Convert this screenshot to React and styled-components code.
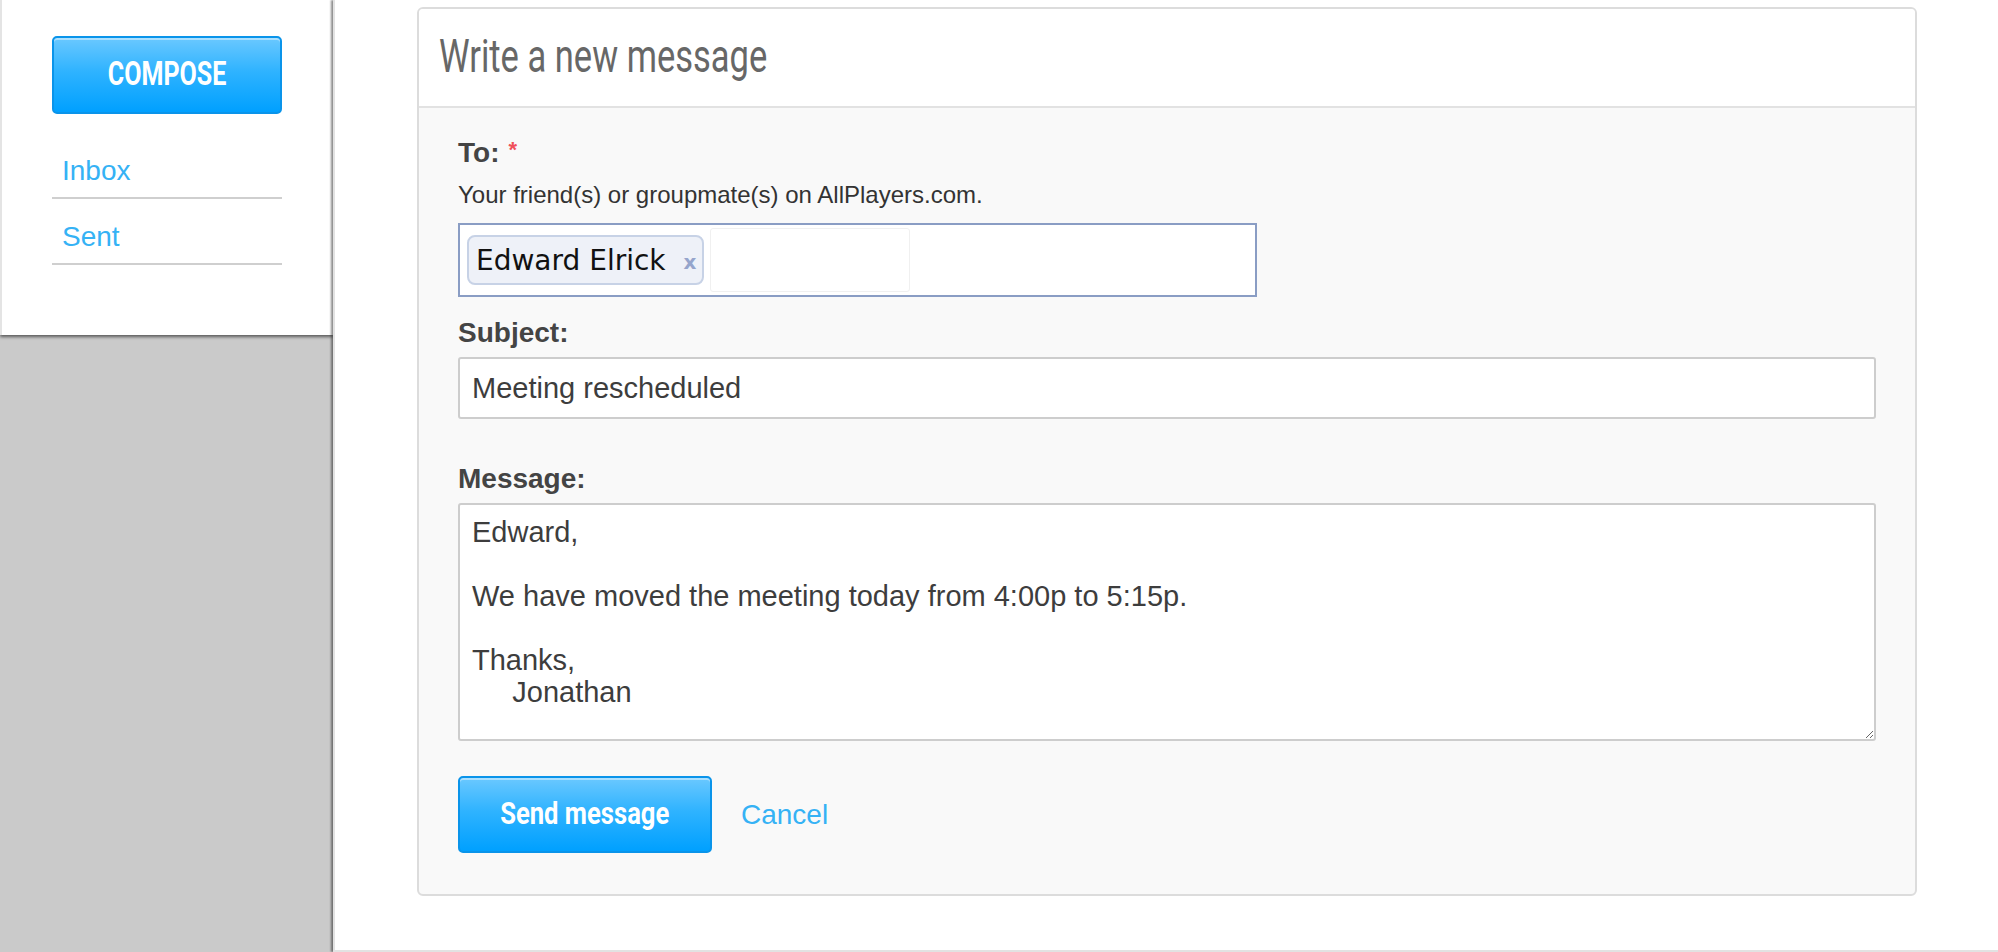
import React from "react";
import styled, { createGlobalStyle } from "styled-components";

const GlobalStyle = createGlobalStyle`
  html, body {
    margin: 0;
    padding: 0;
    background: #fff;
    font-family: "Liberation Sans", Arial, sans-serif;
  }
`;

// No narrow face is installed, so the condensed headings squeeze Roboto
const Condensed = styled.span`
  display: inline-block;
  font-family: Roboto, "Liberation Sans", sans-serif;
  transform: scaleX(${(p) => p.$scale});
  transform-origin: ${(p) => p.$origin || "center"};
  white-space: nowrap;
`;

const Page = styled.div`
  display: flex;
  width: 1998px;
  height: 952px;
  overflow: hidden;
`;

const LeftColumn = styled.div`
  width: 333px;
  flex-shrink: 0;
  background: #cacaca;
`;

const Sidebar = styled.nav`
  background: #fff;
  height: 335px;
  box-sizing: border-box;
  padding: 36px 51px 0 50px;
  border-left: 2px solid #e4e4e4;
  box-shadow: 0 2px 3px rgba(0, 0, 0, 0.55);
`;

const BlueButton = styled.button`
  display: flex;
  align-items: center;
  justify-content: center;
  box-sizing: border-box;
  width: ${(p) => p.$width}px;
  height: ${(p) => p.$height}px;
  margin: 0;
  padding: 0 0 4px;
  border: 2px solid #0a94ea;
  border-radius: 5px;
  background: linear-gradient(to bottom, #6ac8ff 0%, #2fb3ff 45%, #00a0ff 100%);
  box-shadow: inset 0 2px 0 rgba(255, 255, 255, 0.45);
  color: #fff;
  font-weight: 700;
  font-size: ${(p) => p.$size}px;
  line-height: 1;
  cursor: pointer;
`;

const NavList = styled.ul`
  list-style: none;
  margin: 19px 0 0;
  padding: 0;
`;

const NavItem = styled.li`
  padding: 22px 0 10px 10px;
  line-height: 32px;
  font-size: 28px;
  color: #35b2f5;
  border-bottom: 2px solid #cfcfcf;
`;

const Main = styled.main`
  flex: 1;
  box-sizing: border-box;
  height: 952px;
  background: #fff;
  border-left: 2px solid #e2e2e2;
  border-bottom: 2px solid #e2e2e2;
  box-shadow: -2px 0 2px rgba(0, 0, 0, 0.45);
  padding: 7px 81px 0 82px;
`;

const Panel = styled.section`
  border: 2px solid #dcdcdc;
  border-radius: 6px;
  overflow: hidden;
  background: #f9f9f9;
`;

const PanelHeader = styled.header`
  height: 99px;
  box-sizing: border-box;
  padding: 21px 0 0 20px;
  background: #fff;
  border-bottom: 2px solid #e2e2e2;
`;

const Title = styled.h1`
  margin: 0;
  font-weight: 400;
  font-size: 46px;
  line-height: 52px;
  color: #676767;
`;

const PanelBody = styled.div`
  padding: 26px 0 41px 39px;
`;

const Label = styled.label`
  display: block;
  margin-top: ${(p) => p.$top || 0}px;
  font-size: 28px;
  line-height: 32px;
  font-weight: 700;
  color: #444;
`;

const Required = styled.span`
  color: #f0505a;
  font-size: 22px;
  margin-left: 9px;
  vertical-align: 5px;
`;

const Hint = styled.div`
  margin-top: 12px;
  font-size: 24px;
  line-height: 28px;
  color: #333;
`;

const TokenBox = styled.div`
  display: flex;
  align-items: center;
  gap: 6px;
  box-sizing: border-box;
  width: 799px;
  height: 74px;
  margin-top: 14px;
  padding: 0 7px;
  background: #fff;
  border: 2px solid #8a9dc4;
`;

const Token = styled.span`
  display: flex;
  align-items: center;
  box-sizing: border-box;
  height: 50px;
  padding: 0 5px 0 7px;
  background: #eef1f8;
  border: 2px solid #c7d2e6;
  border-radius: 8px;
  font-family: "DejaVu Sans", Verdana, sans-serif;
  font-size: 28px;
  color: #111;
`;

const TokenRemove = styled.span`
  margin-left: 18px;
  margin-top: 3px;
  font-family: "DejaVu Sans", Verdana, sans-serif;
  font-weight: 700;
  font-size: 20px;
  color: #95a5cc;
`;

const TokenInput = styled.input`
  box-sizing: border-box;
  width: 200px;
  height: 64px;
  border: 1px solid #f0f0f0;
  border-radius: 3px;
  background: #fff;
  outline: none;
`;

const fieldBase = `
  display: block;
  box-sizing: border-box;
  width: 1418px;
  margin-top: 8px;
  border: 2px solid #cdcdcd;
  border-radius: 3px;
  background: #fff;
  font-family: "Liberation Sans", Arial, sans-serif;
  font-size: 29px;
  color: #3d3d3d;
  outline: none;
`;

const TextInput = styled.input`
  ${fieldBase}
  height: 62px;
  padding: 0 12px;
`;

const TextArea = styled.textarea`
  ${fieldBase}
  height: 238px;
  padding: 11px 12px;
  line-height: 32px;
  resize: both;
`;

const Actions = styled.div`
  display: flex;
  align-items: center;
  gap: 29px;
  margin-top: 35px;
`;

const CancelLink = styled.a`
  font-size: 28px;
  color: #35b2f5;
  text-decoration: none;
  cursor: pointer;
`;

const messageText = `Edward,

We have moved the meeting today from 4:00p to 5:15p.

Thanks,
     Jonathan`;

export default function App() {
  return (
    <Page>
      <GlobalStyle />
      <LeftColumn>
        <Sidebar>
          <BlueButton $width={230} $height={78} $size={33}>
            <Condensed $scale={0.76}>COMPOSE</Condensed>
          </BlueButton>
          <NavList>
            <NavItem>Inbox</NavItem>
            <NavItem>Sent</NavItem>
          </NavList>
        </Sidebar>
      </LeftColumn>
      <Main>
        <Panel>
          <PanelHeader>
            <Title>
              <Condensed $scale={0.75} $origin="left">
                Write a new message
              </Condensed>
            </Title>
          </PanelHeader>
          <PanelBody>
            <Label>
              To:<Required>*</Required>
            </Label>
            <Hint>Your friend(s) or groupmate(s) on AllPlayers.com.</Hint>
            <TokenBox>
              <Token>
                Edward Elrick<TokenRemove>x</TokenRemove>
              </Token>
              <TokenInput />
            </TokenBox>
            <Label $top={20}>Subject:</Label>
            <TextInput defaultValue="Meeting rescheduled" />
            <Label $top={44}>Message:</Label>
            <TextArea defaultValue={messageText} />
            <Actions>
              <BlueButton $width={254} $height={77} $size={32}>
                <Condensed $scale={0.8}>Send message</Condensed>
              </BlueButton>
              <CancelLink>Cancel</CancelLink>
            </Actions>
          </PanelBody>
        </Panel>
      </Main>
    </Page>
  );
}
